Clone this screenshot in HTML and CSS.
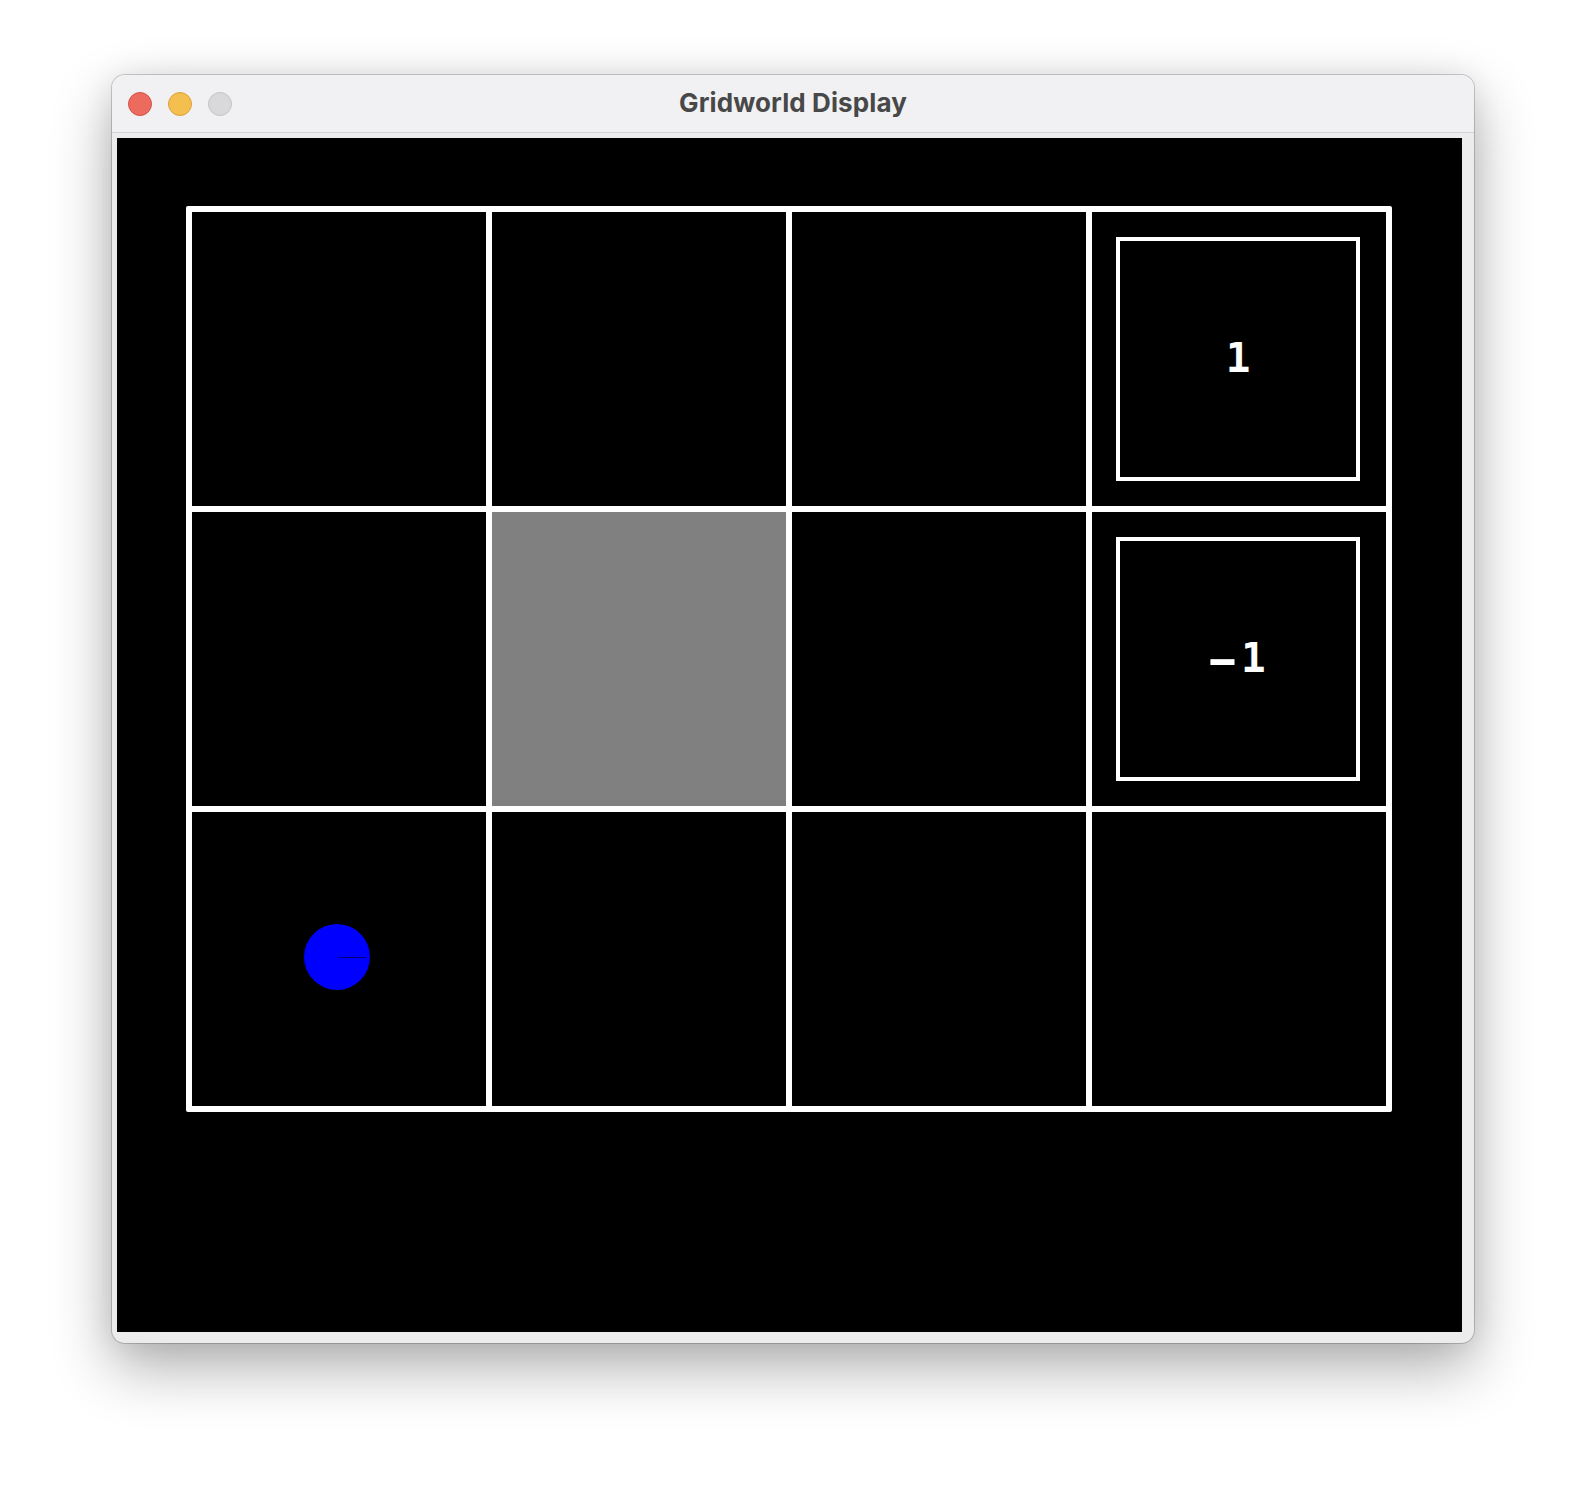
FILE: index.html
```html
<!DOCTYPE html>
<html>
<head>
<meta charset="utf-8">
<title>Gridworld Display</title>
<link rel="stylesheet" href="styles.css">
</head>
<body>
<div class="window">
  <div class="titlebar">
    <div class="lights">
      <span class="light close"></span>
      <span class="light minimize"></span>
      <span class="light zoom"></span>
    </div>
    <div class="title">Gridworld Display</div>
  </div>
  <div class="frame">
    <div class="canvas">
      <div class="grid">
        <div class="cell"></div>
        <div class="cell"></div>
        <div class="cell"></div>
        <div class="cell terminal"><div class="exit"><span>1</span></div></div>
        <div class="cell"></div>
        <div class="cell wall"></div>
        <div class="cell"></div>
        <div class="cell terminal"><div class="exit"><span><span class="minus">-</span>1</span></div></div>
        <div class="cell agent-cell"><div class="agent"><span class="heading"></span></div></div>
        <div class="cell"></div>
        <div class="cell"></div>
        <div class="cell"></div>
      </div>
    </div>
  </div>
</div>
</body>
</html>
```

FILE: styles.css
```css
html, body {
  margin: 0;
  padding: 0;
  background: #ffffff;
}

body {
  padding: 75px 0 0 112px;
  height: 1492px;
  box-sizing: border-box;
  font-family: "Inter", "Liberation Sans", sans-serif;
}

.window {
  width: 1362px;
  height: 1268px;
  border-radius: 13px;
  background: #ececec;
  box-shadow: 0 0 0 1px rgba(0, 0, 0, 0.18), 0 24px 60px rgba(0, 0, 0, 0.32), 0 0 30px rgba(0, 0, 0, 0.08);
  overflow: hidden;
  display: flex;
  flex-direction: column;
}

.titlebar {
  height: 57px;
  background: #f1f1f3;
  border-bottom: 1px solid #d2d2d4;
  position: relative;
  display: flex;
  align-items: center;
  justify-content: center;
  flex: none;
}

.lights {
  position: absolute;
  left: 16px;
  top: 17px;
  display: flex;
  gap: 16px;
}

.light {
  width: 24px;
  height: 24px;
  border-radius: 50%;
  box-sizing: border-box;
  display: block;
}

.close {
  background: #ed6a5e;
  border: 1px solid #d45247;
}

.minimize {
  background: #f5bf4f;
  border: 1px solid #d9a23a;
}

.zoom {
  background: #d9d9db;
  border: 1px solid #c4c4c6;
}

.title {
  font-size: 26px;
  font-weight: 700;
  color: #484848;
  letter-spacing: 0.1px;
  margin-top: -3px;
}

.frame {
  flex: 1;
  padding: 5px 12px 11px 5px;
  display: flex;
}

.canvas {
  flex: 1;
  background: #000000;
  padding: 68px 0 0 69px;
}

.grid {
  display: grid;
  grid-template-columns: repeat(4, 294px);
  grid-template-rows: repeat(3, 294px);
  gap: 6px;
  padding: 6px;
  background: #ffffff;
  width: max-content;
  border-radius: 2px;
}

.cell {
  background: #000000;
  display: flex;
  align-items: center;
  justify-content: center;
}

.wall {
  background: #808080;
}

.terminal {
  justify-content: flex-start;
  padding-left: 24px;
}

.exit {
  width: 244px;
  height: 244px;
  box-sizing: border-box;
  border: 4px solid #ffffff;
  display: flex;
  align-items: center;
  justify-content: center;
  font-family: "DejaVu Sans Mono", "Liberation Mono", monospace;
  font-weight: 700;
  font-size: 41px;
  color: #ffffff;
}

.exit span {
  margin-top: -2px;
}

.exit .minus {
  display: inline-block;
  transform: scaleX(1.9);
  margin: 0 6px 0 0;
  position: relative;
  top: 2px;
}

.agent-cell {
  padding: 0 4px 4px 0;
  box-sizing: border-box;
}

.agent {
  width: 66px;
  height: 66px;
  border-radius: 50%;
  background: #0000ff;
  position: relative;
}

.heading {
  position: absolute;
  left: 35px;
  top: 33px;
  width: 27px;
  height: 1px;
  background: #00006a;
}
```
